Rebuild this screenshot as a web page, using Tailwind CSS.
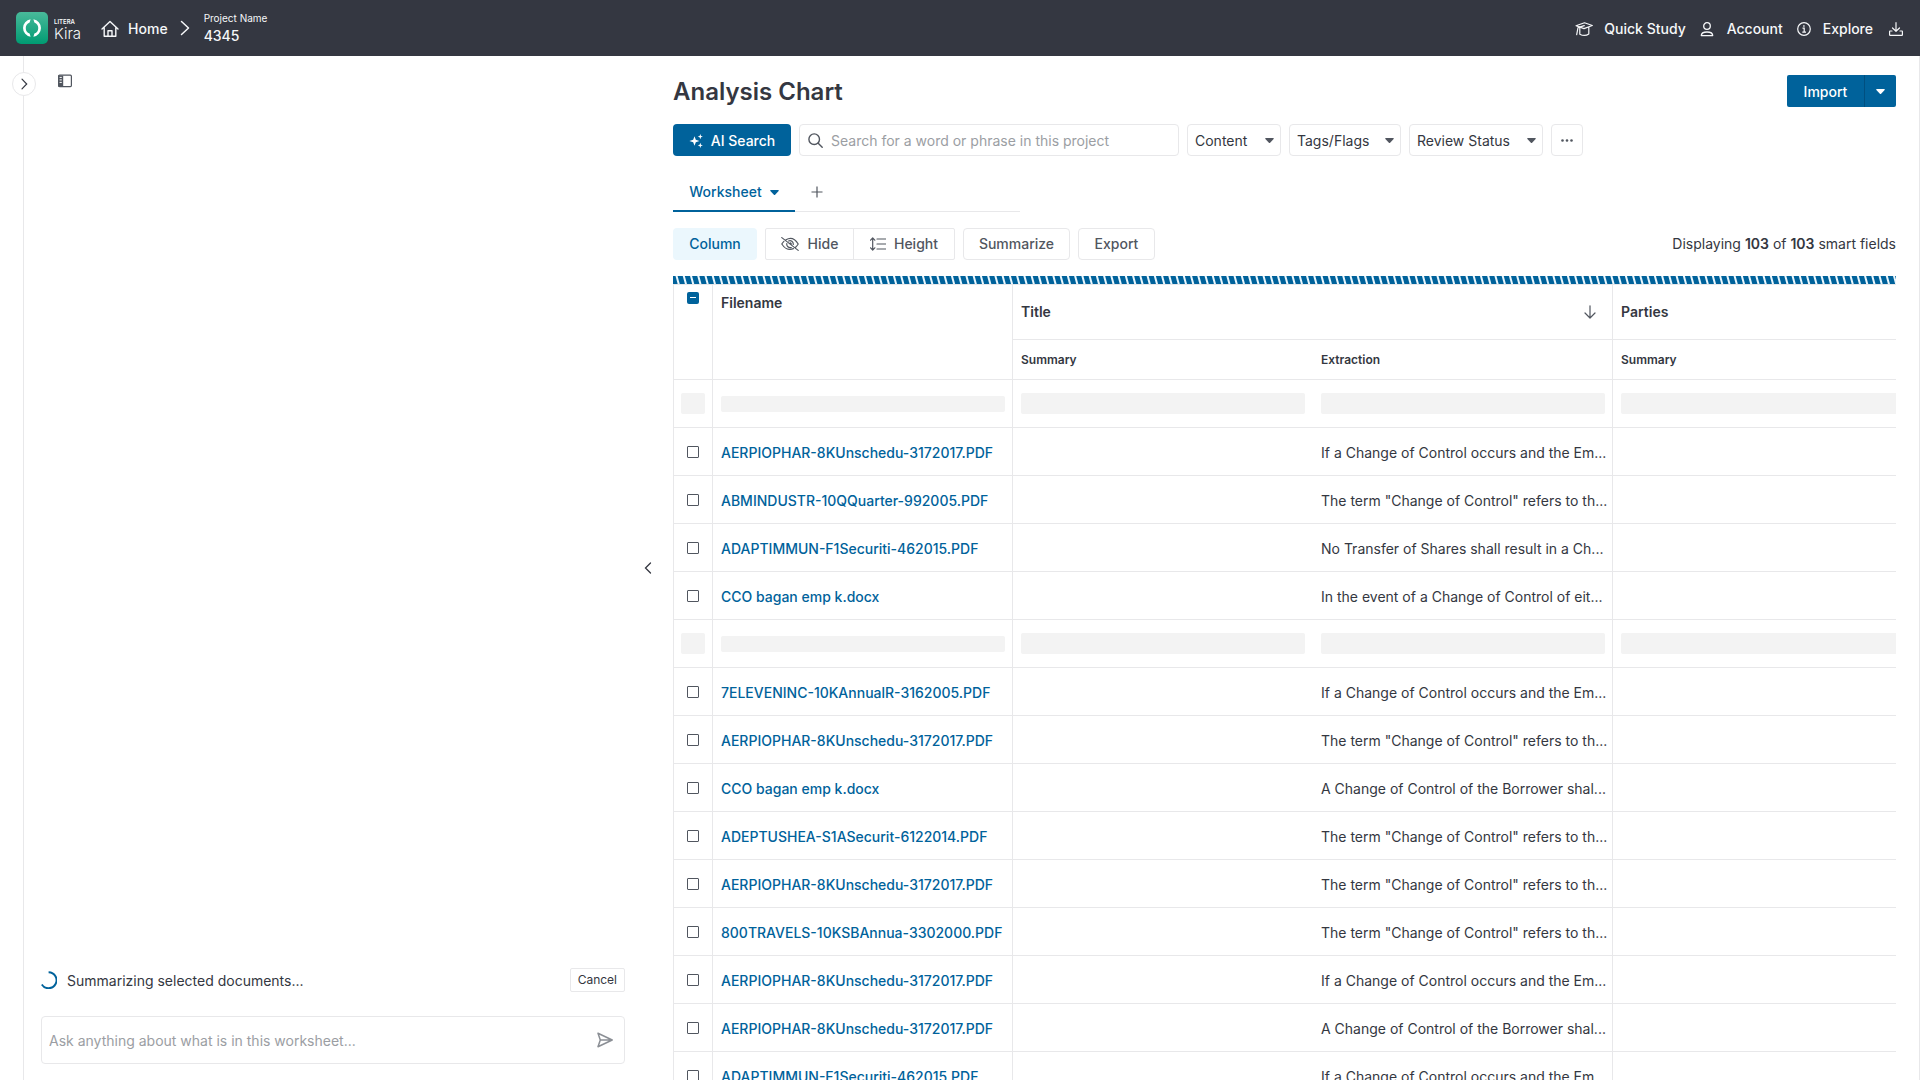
<!DOCTYPE html>
<html lang="en">
<head>
<meta charset="utf-8">
<title>Kira – Analysis Chart</title>
<script src="https://cdn.jsdelivr.net/npm/@tailwindcss/browser@4"></script>
</head>
<body class="flex h-screen flex-col overflow-hidden bg-white font-['Inter',sans-serif] text-sm leading-5 text-[#343741]">
<header class="flex h-14 shrink-0 items-center bg-[#343741] px-4 text-[#f6f7f9]">
  <a href="#" class="flex items-center gap-1.5" aria-label="Litera Kira">
    <svg class="size-8" viewBox="0 0 32 32" fill="none"><defs><linearGradient id="logo" x1="0" y1="0" x2="0" y2="1"><stop offset="0" stop-color="#49b99a"/><stop offset="1" stop-color="#009b72"/></linearGradient></defs><rect width="32" height="32" rx="5" fill="url(#logo)"/><path d="M14.6 7.2A8.9 8.9 0 0 0 14.6 24.8L13.6 21.6A6 6 0 0 1 13.6 10.4ZM17.4 7.2A8.9 8.9 0 0 1 17.4 24.8L18.4 21.6A6 6 0 0 0 18.4 10.4Z" fill="#fff"/></svg>
    <span class="flex flex-col pt-1"><span class="text-[6px] leading-2 font-semibold">LITERA</span><span class="text-[15px] leading-4 font-light">Kira</span></span>
  </a>
  <a href="#" class="ml-5 flex items-center gap-[9px] pt-0.5 font-medium">
    <svg class="size-[18px]" viewBox="0 0 18 18" fill="none" stroke="currentColor" stroke-width="1.4" stroke-linecap="round" stroke-linejoin="round"><path d="M1 9L9 1.5L17 9M3.2 7.6V16.3H14.8V7.6M7 16V10.8H11V16"/></svg>
    Home
  </a>
  <svg class="ml-3 h-4 w-[10px]" viewBox="0 0 10 16" fill="none" stroke="currentColor" stroke-width="1.5" stroke-linecap="round" stroke-linejoin="round"><path d="M1.5 1.5L8.5 8L1.5 14.5"/></svg>
  <div class="ml-[14px] flex flex-col"><span class="text-[10px] leading-4">Project Name</span><span class="leading-5 font-medium">4345</span></div>
  <nav class="ml-auto flex items-center pt-0.5 pr-px font-medium">
    <a href="#" class="flex items-center gap-[11px]">
      <svg class="h-4 w-[18px]" viewBox="0 0 18 16" fill="none" stroke="currentColor" stroke-width="1.2" stroke-linecap="round" stroke-linejoin="round"><path d="M1 4.8L9.5 1.8L17.3 4.5L9 7.6ZM4.8 7V13.2C7.5 14.6 11.5 14.6 13.8 13V6.3M9.3 4.6L3 6.6L1.7 13.6"/></svg>
      Quick Study</a>
    <a href="#" class="ml-3.5 flex items-center gap-[13px]">
      <svg class="h-4 w-[14px]" viewBox="0 0 14 16" fill="none" stroke="currentColor" stroke-width="1.3" stroke-linejoin="round"><circle cx="7" cy="5" r="3.3"/><path d="M1.3 14.6C1.3 9.8 12.7 9.8 12.7 14.6Z"/></svg>
      Account</a>
    <a href="#" class="ml-3.5 flex items-center gap-3">
      <svg class="size-[14px]" viewBox="0 0 14 14" fill="none" stroke="currentColor" stroke-width="1.2"><circle cx="7" cy="7" r="6.3"/><path d="M5.5 6.2H7.2V10.2M5.3 10.2H9"/><path d="M6.2 4H7.6" stroke-width="1.5"/></svg>
      Explore</a>
    <button aria-label="Downloads" class="ml-4"><svg class="size-[14px]" viewBox="0 0 14 14" fill="none" stroke="currentColor" stroke-width="1.2" stroke-linecap="round" stroke-linejoin="round"><path d="M7 .7V9.2M3.5 6L7 9.3L10.5 6M3 9H1C.7 9 .6 9.2.6 9.5V12.8C.6 13.2.8 13.4 1.2 13.4H12.8C13.2 13.4 13.4 13.2 13.4 12.8V9.5C13.4 9.2 13.3 9 13 9H11"/></svg></button>
  </nav>
</header>

<div class="flex min-h-0 flex-1 border-r border-[#e8e8ea]">
  <aside class="relative w-6 shrink-0 border-r border-[#e8e8ea]">
    <button aria-label="Open navigation" class="absolute top-4 left-3 flex size-6 items-center justify-center rounded-full border border-[#e8e8ea] bg-white"><svg class="h-3 w-2" viewBox="0 0 8 12" fill="none" stroke="#343741" stroke-width="1.2" stroke-linecap="round"><path d="M2 1.2L6.7 6L2 10.8"/></svg></button>
  </aside>

  <section class="flex w-[612px] shrink-0 flex-col pt-[18px] pr-[11px] pb-4 pl-[17px]">
    <button aria-label="Toggle side panel" class="ml-[17px] w-[14px]"><svg class="h-[14px] w-[14px]" viewBox="0 0 14 14"><rect x=".6" y="1.2" width="12.8" height="11.4" rx="1" fill="#fff" stroke="#51565f" stroke-width="1.2"/><path d="M0 1.6H5.2V12.6H0Z" fill="#51565f"/><path d="M1.6 3.4H3.8M1.6 5.9H3.8M1.6 8.4H3.8" stroke="#fff"/></svg></button>
    <div class="mt-auto flex h-6 items-center">
      <svg class="h-[18px] w-4" viewBox="0 0 16 18" fill="none" stroke="#00629b" stroke-width="2"><path d="M7.6 1.2A8 8 0 1 1 .8 13.5"/></svg>
      <span class="ml-2.5 pt-0.5">Summarizing selected documents...</span>
      <button class="ml-auto h-6 rounded-xs border border-[#e8e8ea] px-[7px] text-xs leading-4">Cancel</button>
    </div>
    <form class="mt-6 flex h-12 items-center rounded-sm border border-[#e8e8ea] pr-[11px] pl-[7px]">
      <input aria-label="Ask about this worksheet" class="min-w-0 flex-1 pt-0.5 outline-none placeholder:text-[#9b9ea3]" placeholder="Ask anything about what is in this worksheet...">
      <button type="button" aria-label="Send"><svg class="size-4" viewBox="0 0 16 16" fill="none" stroke="#8b8f95" stroke-width="1.5" stroke-linejoin="round"><path d="M1 1.3L15.2 8L1 14.7L3.3 8ZM3.3 8H15"/></svg></button>
    </form>
  </section>

  <div class="flex w-[37px] shrink-0 items-center"><button aria-label="Collapse panel" class="ml-2"><svg class="h-3 w-2" viewBox="0 0 8 12" fill="none" stroke="#343741" stroke-width="1.3" stroke-linecap="round"><path d="M6.5 1L1.5 6L6.5 11"/></svg></button></div>

  <main class="flex min-w-0 flex-1 flex-col overflow-hidden pt-[18px] mr-[23px]">
    <div class="flex shrink-0 items-center justify-between">
      <h1 class="pt-0.5 text-2xl leading-8 font-semibold">Analysis Chart</h1>
      <div class="flex h-8 text-white">
        <button class="w-[77px] rounded-l-xs bg-[#00629b] pt-0.5 font-medium">Import</button>
        <button aria-label="More import options" class="flex w-8 items-center justify-center rounded-r-xs border-l border-[#004f80] bg-[#00629b]"><svg class="h-[5px] w-[9px]" viewBox="0 0 9 5" fill="currentColor"><path d="M.6 0H8.4Q9 .3 8.6 .9L5.1 4.7Q4.5 5.2 3.9 4.7L.4 .9Q0 .3.6 0Z"/></svg></button>
      </div>
    </div>

    <div class="mt-4 flex h-8 shrink-0 gap-2">
      <button class="flex h-8 w-[118px] shrink-0 items-center justify-center gap-2 rounded-sm bg-[#00629b] pt-0.5 font-medium text-white"><svg class="size-[14px]" viewBox="0 0 14 14" fill="currentColor"><path d="M5.5 2.2L6.8 5.7L10.4 7L6.8 8.3L5.5 11.8L4.2 8.3L.4 7L4.2 5.7ZM11.3 0L12 1.9L13.9 2.6L12 3.3L11.3 5.2L10.6 3.3L8.7 2.6L10.6 1.9ZM11.3 8.8L12 10.7L13.9 11.4L12 12.1L11.3 14L10.6 12.1L8.7 11.4L10.6 10.7Z"/></svg>AI Search</button>
      <label class="flex h-8 w-[380px] items-center gap-2 rounded-sm border border-[#e8e8ea] px-2"><svg class="size-[15px] shrink-0" viewBox="0 0 15 15" fill="none" stroke="#51565f" stroke-width="1.4" stroke-linecap="round"><circle cx="6.2" cy="6.2" r="5.3"/><path d="M10.2 10.2L14.2 14.2"/></svg><input type="search" aria-label="Search project" class="min-w-0 flex-1 pt-0.5 outline-none placeholder:text-[#9b9ea3]" placeholder="Search for a word or phrase in this project"></label>
      <div class="relative"><select aria-label="Content" class="h-8 w-[94px] appearance-none rounded-sm border border-[#e8e8ea] bg-white pt-0.5 pl-[7px]"><option>Content</option></select><svg class="pointer-events-none absolute top-[14px] right-[7px] h-[5px] w-[9px]" viewBox="0 0 9 5" fill="#51565f"><path d="M.6 0H8.4Q9 .3 8.6 .9L5.1 4.7Q4.5 5.2 3.9 4.7L.4 .9Q0 .3.6 0Z"/></svg></div>
      <div class="relative"><select aria-label="Tags/Flags" class="h-8 w-28 appearance-none rounded-sm border border-[#e8e8ea] bg-white pt-0.5 pl-[7px]"><option>Tags/Flags</option></select><svg class="pointer-events-none absolute top-[14px] right-[7px] h-[5px] w-[9px]" viewBox="0 0 9 5" fill="#51565f"><path d="M.6 0H8.4Q9 .3 8.6 .9L5.1 4.7Q4.5 5.2 3.9 4.7L.4 .9Q0 .3.6 0Z"/></svg></div>
      <div class="relative"><select aria-label="Review Status" class="h-8 w-[134px] appearance-none rounded-sm border border-[#e8e8ea] bg-white pt-0.5 pl-[7px]"><option>Review Status</option></select><svg class="pointer-events-none absolute top-[14px] right-[7px] h-[5px] w-[9px]" viewBox="0 0 9 5" fill="#51565f"><path d="M.6 0H8.4Q9 .3 8.6 .9L5.1 4.7Q4.5 5.2 3.9 4.7L.4 .9Q0 .3.6 0Z"/></svg></div>
      <button aria-label="More filters" class="flex size-8 items-center justify-center rounded-sm border border-[#e8e8ea]"><svg class="h-[3px] w-3" viewBox="0 0 12 3" fill="#51565f"><circle cx="1.5" cy="1.5" r="1.3"/><circle cx="6" cy="1.5" r="1.3"/><circle cx="10.5" cy="1.5" r="1.3"/></svg></button>
    </div>

    <div class="mt-4 flex h-10 w-[347px] shrink-0 border-b border-[#e8e8ea]">
      <button class="flex h-10 w-[122px] items-center justify-center gap-2 border-b-2 border-[#00629b] pt-0.5 font-medium text-[#00629b]">Worksheet<svg class="h-[5px] w-[9px]" viewBox="0 0 9 5" fill="currentColor"><path d="M.6 0H8.4Q9 .3 8.6 .9L5.1 4.7Q4.5 5.2 3.9 4.7L.4 .9Q0 .3.6 0Z"/></svg></button>
      <button aria-label="Add worksheet" class="ml-4"><svg class="size-3" viewBox="0 0 12 12" stroke="#51565f" stroke-width="1.2"><path d="M6 .5V11.5M.5 6H11.5"/></svg></button>
    </div>

    <div class="mt-4 flex h-8 shrink-0 items-center gap-2 font-medium text-[#51565f]">
      <button class="h-8 w-[84px] rounded-sm bg-[#ebf7fd] text-[#00629b]">Column</button>
      <div class="flex h-8 rounded-xs border border-[#e8e8ea]">
        <button class="flex w-[88px] items-center justify-center gap-[9px] border-r border-[#e8e8ea]"><svg class="h-[14px] w-[18px]" viewBox="0 0 18 14" fill="none" stroke="currentColor" stroke-width="1.2" stroke-linecap="round"><path d="M.8 .6L17.2 13.4M5 2.8C11 -.8 15.2 3.8 17.2 7C16.6 8 15.7 9.2 14.6 10.2M12.4 11.6C7 14 2.8 10.3 .8 7C1.3 6.1 2 5.2 2.9 4.3M7.6 4C10 2.9 12.5 4.7 12.3 7.5M10.3 10.5C7.5 11.2 5.4 9 5.8 6.5M9.2 5.8C10 5.9 10.3 6.4 10.2 7.2"/></svg>Hide</button>
        <button class="flex w-[100px] items-center justify-center gap-2"><svg class="h-[14px] w-4" viewBox="0 0 16 14" fill="none" stroke="currentColor" stroke-width="1.2" stroke-linecap="round" stroke-linejoin="round"><path d="M2.7 1V13M.6 3.2L2.7 1L4.8 3.2M.6 10.8L2.7 13L4.8 10.8M7 2H15.5M7 7H15.5M7 12H15.5"/></svg>Height</button>
      </div>
      <button class="h-8 w-[107px] rounded-sm border border-[#e8e8ea]">Summarize</button>
      <button class="h-8 w-[77px] rounded-sm border border-[#e8e8ea]">Export</button>
      <p class="ml-auto font-normal text-[#343741]">Displaying <b class="font-semibold">103</b> of <b class="font-semibold">103</b> smart fields</p>
    </div>

    <div role="progressbar" aria-label="Summarizing" class="mt-4 h-2 shrink-0 bg-[repeating-linear-gradient(75deg,#00629b_0px,#00629b_4px,#ebf7fd_5px,#ebf7fd_6px,#00629b_7px)]"></div>

    <table class="w-[1240px] shrink-0 table-fixed border-separate border-spacing-0">
      <colgroup><col class="w-10"><col class="w-[300px]"><col class="w-[300px]"><col class="w-[300px]"><col class="w-[300px]"></colgroup>
      <thead class="text-left">
        <tr class="h-14">
          <th rowspan="2" class="border border-[#e8e8ea] pt-[7px] align-top"><label class="relative mx-auto block size-3"><input type="checkbox" checked aria-label="Select all rows" class="block size-3 appearance-none rounded-xs bg-[#00629b]"><span class="absolute inset-x-[3px] top-[5px] h-px bg-white"></span></label></th>
          <th rowspan="2" class="border-t border-r border-b border-[#e8e8ea] px-2 pt-2 align-top font-semibold">Filename</th>
          <th colspan="2" class="border-t border-r border-b border-[#e8e8ea] px-2 font-semibold"><div class="flex items-center justify-between pr-2">Title<svg class="h-[14px] w-3" viewBox="0 0 12 14" fill="none" stroke="#51565f" stroke-width="1.2" stroke-linecap="round" stroke-linejoin="round"><path d="M6 .8V13M1 8L6 13L11 8"/></svg></div></th>
          <th class="border-t border-b border-[#e8e8ea] px-2 font-semibold">Parties</th>
        </tr>
        <tr class="h-10 text-xs">
          <th class="border-b border-[#e8e8ea] px-2 font-semibold">Summary</th>
          <th class="border-r border-b border-[#e8e8ea] px-2 font-semibold">Extraction</th>
          <th class="border-b border-[#e8e8ea] px-2 font-semibold">Summary</th>
        </tr>
      </thead>
      <tbody id="rows"></tbody>
    </table>
  </main>
</div>
<script>
const A = 'If a Change of Control occurs and the Em...';
const B = 'The term "Change of Control" refers to th...';
const C = 'A Change of Control of the Borrower shal...';
const rows = [null,
  ['AERPIOPHAR-8KUnschedu-3172017.PDF', A],
  ['ABMINDUSTR-10QQuarter-992005.PDF', B],
  ['ADAPTIMMUN-F1Securiti-462015.PDF', 'No Transfer of Shares shall result in a Ch...'],
  ['CCO bagan emp k.docx', 'In the event of a Change of Control of eit...'],
  null,
  ['7ELEVENINC-10KAnnualR-3162005.PDF', A],
  ['AERPIOPHAR-8KUnschedu-3172017.PDF', B],
  ['CCO bagan emp k.docx', C],
  ['ADEPTUSHEA-S1ASecurit-6122014.PDF', B],
  ['AERPIOPHAR-8KUnschedu-3172017.PDF', B],
  ['800TRAVELS-10KSBAnnua-3302000.PDF', B],
  ['AERPIOPHAR-8KUnschedu-3172017.PDF', A],
  ['AERPIOPHAR-8KUnschedu-3172017.PDF', C],
  ['ADAPTIMMUN-F1Securiti-462015.PDF', A]];
const bar = '<div class="h-[21px] rounded-xs bg-[#f3f3f3]"></div>';
document.getElementById('rows').innerHTML = rows.map(r => `<tr class="h-12">
  <td class="border-x border-b border-[#e8e8ea] px-[7px]">${r ? `<input type="checkbox" aria-label="Select ${r[0]}" class="mx-auto block size-3 appearance-none rounded-[1px] border border-[#51565f]">` : bar}</td>
  <td class="border-r border-b border-[#e8e8ea] pr-[7px] pl-2 font-medium">${r ? `<a href="#" class="block pt-0.5 whitespace-nowrap text-[#00629b]">${r[0]}</a>` : '<div class="h-4 rounded-xs bg-[#f3f3f3]"></div>'}</td>
  <td class="border-b border-[#e8e8ea] px-2">${r ? '' : bar}</td>
  <td class="border-r border-b border-[#e8e8ea] pr-[7px] pl-2">${r ? `<div class="pt-0.5 whitespace-nowrap">${r[1]}</div>` : bar}</td>
  <td class="border-b border-[#e8e8ea] px-2">${r ? '' : bar}</td></tr>`).join('');
</script>
</body>
</html>
